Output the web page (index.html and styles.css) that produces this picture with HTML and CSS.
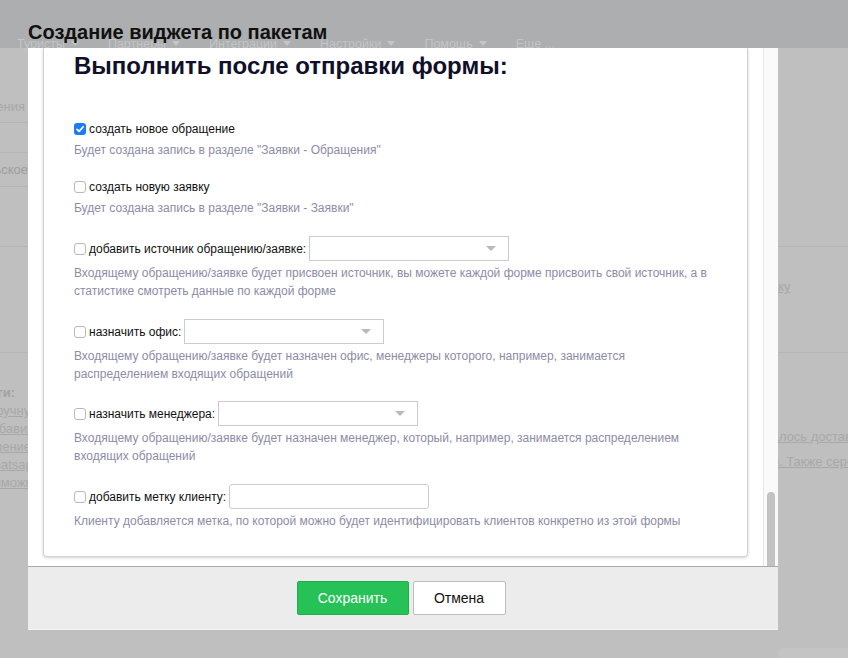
FILE: index.html
```html
<!DOCTYPE html>
<html lang="ru">
<head>
<meta charset="utf-8">
<title>Создание виджета по пакетам</title>
<link rel="stylesheet" href="styles.css">
</head>
<body>
<div class="page">
  <header class="topbar">
    <nav class="nav">
      <span class="nav-item">Туристы<i class="caret"></i></span>
      <span class="nav-item">Партнеры<i class="caret"></i></span>
      <span class="nav-item">Интеграции<i class="caret"></i></span>
      <span class="nav-item">Настройки<i class="caret"></i></span>
      <span class="nav-item">Помощь<i class="caret"></i></span>
      <span class="nav-item">Еще ...</span>
    </nav>
  </header>
  <div class="content">
    <div class="col-left">
      <div class="bg-row l1"><span class="bg-text">Настройки обращения</span></div>
      <div class="bg-row l2"></div>
      <div class="bg-row l3"><span class="bg-text mid">Пользовательское</span></div>
      <div class="bg-row l4"></div>
      <div class="bg-row l5"></div>
      <div class="bg-block">
        <span class="bg-text strong">Возможности:</span>
        <span class="bg-link">вручную</span>
        <span class="bg-link">добавить</span>
        <span class="bg-link">влением</span>
        <span class="bg-link">whatsapp</span>
        <span class="bg-link">возможно</span>
      </div>
    </div>
    <div class="col-right">
      <div class="bg-row r1"></div>
      <div class="bg-row r2"><span class="bg-link lead1">заявку</span></div>
      <div class="bg-rblock">
        <span class="bg-link lead2">не удалось доставить</span>
        <span class="bg-link lead3">ки. Также сервис</span>
      </div>
      <div class="bg-corner"></div>
    </div>
  </div>
</div>

<div class="modal">
  <h1 class="modal-title">Создание виджета по пакетам</h1>
  <div class="modal-body">
    <div class="scroll-area">
      <div class="card">
        <h2 class="card-title">Выполнить после отправки формы:</h2>

        <div class="option">
          <div class="option-row">
            <span class="cb checked"><svg width="12" height="12" viewBox="0 0 12 12"><path d="M3 6.3 L5.1 8.4 L9.2 3.7" fill="none" stroke="#fff" stroke-width="1.7" stroke-linecap="round" stroke-linejoin="round"/></svg></span>
            <span class="option-label">создать новое обращение</span>
          </div>
          <p class="option-desc">Будет создана запись в разделе "Заявки - Обращения"</p>
        </div>

        <div class="option">
          <div class="option-row">
            <span class="cb"></span>
            <span class="option-label">создать новую заявку</span>
          </div>
          <p class="option-desc">Будет создана запись в разделе "Заявки - Заявки"</p>
        </div>

        <div class="option">
          <div class="option-row">
            <span class="cb"></span>
            <span class="option-label">добавить источник обращению/заявке:</span>
            <span class="select"><i class="select-caret"></i></span>
          </div>
          <p class="option-desc">Входящему обращению/заявке будет присвоен источник, вы можете каждой форме присвоить свой источник, а в статистике смотреть данные по каждой форме</p>
        </div>

        <div class="option tight">
          <div class="option-row">
            <span class="cb"></span>
            <span class="option-label">назначить офис:</span>
            <span class="select"><i class="select-caret"></i></span>
          </div>
          <p class="option-desc">Входящему обращению/заявке будет назначен офис, менеджеры которого, например, занимается распределением входящих обращений</p>
        </div>

        <div class="option">
          <div class="option-row">
            <span class="cb"></span>
            <span class="option-label">назначить менеджера:</span>
            <span class="select"><i class="select-caret"></i></span>
          </div>
          <p class="option-desc">Входящему обращению/заявке будет назначен менеджер, который, например, занимается распределением входящих обращений</p>
        </div>

        <div class="option">
          <div class="option-row">
            <span class="cb"></span>
            <span class="option-label">добавить метку клиенту:</span>
            <span class="text-input"></span>
          </div>
          <p class="option-desc">Клиенту добавляется метка, по которой можно будет идентифицировать клиентов конкретно из этой формы</p>
        </div>
      </div>
    </div>
    <div class="scrollbar"><div class="thumb"></div></div>
  </div>
  <div class="modal-footer">
    <button class="btn btn-save">Сохранить</button>
    <button class="btn btn-cancel">Отмена</button>
  </div>
</div>
</body>
</html>
```

FILE: styles.css
```css
* { box-sizing: border-box; }
html, body { margin: 0; padding: 0; }
body {
  width: 848px;
  height: 658px;
  overflow: hidden;
  position: relative;
  background: #bfbfbf;
  font-family: "Liberation Sans", Arial, sans-serif;
}

/* ---------- dimmed background page ---------- */
.topbar {
  height: 48px;
  background: #adaeaf;
  padding: 38px 0 0 17px;
}
.nav {
  display: flex;
  gap: 29px;
  font-size: 12.5px;
  line-height: 13px;
  color: #c4c5c6;
  white-space: nowrap;
}
.caret {
  display: inline-block;
  border-left: 4px solid transparent;
  border-right: 4px solid transparent;
  border-top: 5px solid #c4c5c6;
  margin-left: 6px;
  vertical-align: 2px;
}
.content {
  display: flex;
  justify-content: space-between;
  height: 610px;
}
.col-left { width: 28px; display: flex; flex-direction: column; }
.col-right { width: 70px; display: flex; flex-direction: column; }
.bg-row {
  display: flex;
  justify-content: flex-end;
  align-items: center;
  border-bottom: 1px solid #b5b5b5;
  white-space: nowrap;
  flex: none;
}
.bg-text { white-space: nowrap; font-size: 13px; color: #a8a8a8; }
.bg-text.mid { color: #9d9d9d; }
.bg-text.strong { font-weight: bold; color: #a2a2a2; }
.l1 { height: 75px; align-items: flex-end; padding: 0 3px 8px 0; }
.l2 { height: 30px; }
.l3 { height: 34px; }
.l4 { height: 60px; }
.l5 { height: 106px; }
.bg-block {
  display: flex;
  flex-direction: column;
  align-items: flex-end;
  margin-top: 31px;
  font-size: 13px;
  line-height: 18px;
}
.bg-block .bg-text { margin-right: 13px; }
.bg-block .bg-link { margin-right: -12px; }
.bg-link {
  white-space: nowrap;
  font-size: 13px;
  line-height: 18px;
  color: #a8a8a8;
  text-decoration: underline;
}
.r1 { height: 199px; }
.r2 { height: 106px; justify-content: flex-start; align-items: flex-start; padding-top: 31px; }
.lead1 { margin-left: -27px; }
.bg-rblock {
  display: flex;
  flex-direction: column;
  align-items: flex-start;
  margin-top: 75px;
  gap: 7px;
}
.lead2 { margin-left: -38px; }
.lead3 { margin-left: -12px; }
.bg-corner {
  margin-top: auto;
  height: 10px;
  background: #c4c4c4;
  border-top-left-radius: 5px;
}

/* ---------- modal ---------- */
.modal {
  position: absolute;
  left: 28px;
  top: 20px;
  width: 750px;
}
.modal-title {
  margin: 0;
  height: 28px;
  font-size: 20px;
  line-height: 22px;
  padding-top: 1px;
  font-weight: bold;
  color: #111;
  white-space: nowrap;
}
.modal-body {
  height: 518px;
  background: #fff;
  display: flex;
  overflow: hidden;
}
.scroll-area {
  flex: 1;
  padding: 0 15px 9px 15px;
  display: flex;
  flex-direction: column;
  justify-content: flex-end;
}
.card {
  border: 1px solid #d2d2d2;
  border-top: none;
  border-radius: 0 0 4px 4px;
  box-shadow: 0 1px 3px rgba(0, 0, 0, 0.18);
  padding: 4px 32px 22px 30px;
  height: 509px;
}
.card-title {
  margin: 0 0 40px;
  font-size: 24px;
  line-height: 28px;
  font-weight: bold;
  color: #10102a;
}
.option { margin-bottom: 19px; }
.option.tight { margin-bottom: 18px; }
.option:last-child { margin-bottom: 0; }
.option-row {
  display: flex;
  align-items: center;
  min-height: 18px;
}
.cb {
  width: 12px;
  height: 12px;
  border: 1px solid #b9b9b9;
  border-radius: 3px;
  background: #fff;
  flex: none;
  margin-right: 3px;
  display: flex;
}
.cb.checked {
  border: none;
  background: #1b7cf5;
}
.option-label {
  font-size: 12px;
  color: #111;
  white-space: nowrap;
}
.select {
  margin-left: 3px;
  width: 200px;
  height: 25px;
  border: 1px solid #cacad2;
  background: #fff;
  display: flex;
  align-items: center;
  justify-content: flex-end;
  padding-right: 12px;
}
.select-caret {
  width: 0;
  height: 0;
  border-left: 5px solid transparent;
  border-right: 5px solid transparent;
  border-top: 5px solid #b8b8c0;
}
.text-input {
  margin-left: 3px;
  width: 200px;
  height: 25px;
  border: 1px solid #cacad2;
  border-radius: 3px;
  background: #fff;
}
.option-desc {
  margin: 3px 0 0;
  font-size: 12px;
  line-height: 18px;
  color: #8c8ca6;
}
.scrollbar {
  width: 15px;
  flex: none;
  background: #fafafa;
  border-left: 1px solid #e6e6e6;
  padding: 444px 3px 0 3px;
}
.thumb {
  width: 8px;
  height: 120px;
  background: #c2c2c2;
  border-radius: 4px;
}
.modal-footer {
  height: 64px;
  background: #ececec;
  border-top: 1px solid #a9a9a9;
  border-bottom: 1px solid #f4f4f4;
  padding-top: 14px;
  padding-right: 4px;
  display: flex;
  justify-content: center;
  gap: 4px;
}
.btn {
  height: 34px;
  font-family: "Liberation Sans", Arial, sans-serif;
  font-size: 14px;
  border-radius: 2px;
  cursor: pointer;
}
.btn-save {
  width: 112px;
  background: #26c157;
  border: 1px solid #1eae4b;
  color: #fff;
}
.btn-cancel {
  width: 93px;
  background: #fff;
  border: 1px solid #bdbdbd;
  color: #111;
}
```
